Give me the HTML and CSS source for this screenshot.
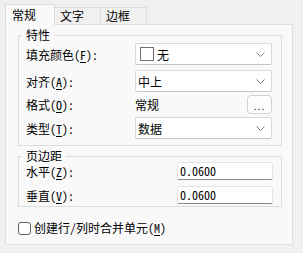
FILE: index.html
```html
<!DOCTYPE html>
<html lang="zh-CN">
<head>
    <meta charset="UTF-8">
    <title>单元格属性</title>
    <link rel="stylesheet" href="styles.css">
</head>
<body>
    <div class="tabs">
        <div class="tab active">常规</div>
        <div class="tab">文字</div>
        <div class="tab">边框</div>
    </div>
    <div class="panel">
        <fieldset class="group props">
            <legend>特性</legend>
            <div class="row r1">
                <span class="label">填充颜色(<u>F</u>):</span>
                <div class="select">
                    <span class="swatch"></span><span>无</span>
                    <svg class="chev" width="9" height="5" viewBox="0 0 9 5"><polyline points="0.5,0.5 4.5,4.5 8.5,0.5" fill="none" stroke="#808080" stroke-width="1"/></svg>
                </div>
            </div>
            <div class="row r2">
                <span class="label">对齐(<u>A</u>):</span>
                <div class="select">
                    <span>中上</span>
                    <svg class="chev" width="9" height="5" viewBox="0 0 9 5"><polyline points="0.5,0.5 4.5,4.5 8.5,0.5" fill="none" stroke="#808080" stroke-width="1"/></svg>
                </div>
            </div>
            <div class="row r3">
                <span class="label">格式(<u>O</u>):</span>
                <div class="format">
                    <span>常规</span>
                    <button class="dots">...</button>
                </div>
            </div>
            <div class="row r4">
                <span class="label">类型(<u>T</u>):</span>
                <div class="select">
                    <span>数据</span>
                    <svg class="chev" width="9" height="5" viewBox="0 0 9 5"><polyline points="0.5,0.5 4.5,4.5 8.5,0.5" fill="none" stroke="#808080" stroke-width="1"/></svg>
                </div>
            </div>
        </fieldset>

        <fieldset class="group margins">
            <legend>页边距</legend>
            <div class="row m1">
                <span class="label">水平(<u>Z</u>):</span>
                <div class="input">0.0600</div>
            </div>
            <div class="row m2">
                <span class="label">垂直(<u>V</u>):</span>
                <div class="input">0.0600</div>
            </div>
        </fieldset>

        <label class="check">
            <span class="box"></span>
            <span>创建行/列时合并单元(<u>M</u>)</span>
        </label>
    </div>
</body>
</html>
```

FILE: styles.css
```css
body {
    margin: 0;
    background-color: #f0f0f0;
    font-family: "Noto Sans Mono CJK SC", "Noto Sans CJK SC", sans-serif;
    font-size: 12px;
    color: #000;
    width: 303px;
    height: 253px;
    overflow: hidden;
}
u {
    text-decoration-thickness: 1px;
    text-underline-offset: 2px;
}
.tabs {
    display: flex;
    align-items: flex-end;
    padding: 4px 0 0 5px;
    height: 20px;
}
.tab {
    box-sizing: border-box;
    height: 17px;
    width: 46px;
    padding-left: 5px;
    line-height: 16px;
    border: 1px solid #dcdcdc;
    border-bottom: none;
    border-left: none;
    background-color: #f0f0f0;
}
.tab.active {
    width: 50px;
    height: 21px;
    margin-bottom: -1px;
    position: relative;
    border-left: 1px solid #dcdcdc;
    background-color: #f9f9f9;
    line-height: 19px;
    padding-left: 6px;
}
.panel {
    box-sizing: border-box;
    margin: 0 10px 0 5px;
    height: 221px;
    border: 1px solid #e0e0e0;
    background-color: #f9f9f9;
    padding: 3px 10px 0 12px;
}
.group {
    margin: 0;
    border: 1px solid #dcdcdc;
    padding: 0 8px 0 7px;
}
.group legend {
    margin-left: -4px;
    padding: 0 4px;
    line-height: 14px;
}
.props {
    height: 118px;
    box-sizing: border-box;
}
.margins {
    margin-top: 3px;
    height: 58px;
    box-sizing: border-box;
}
.row {
    display: flex;
    align-items: center;
}
.label {
    width: 109px;
    flex: none;
    line-height: 13px;
}
.r1 { height: 22px; margin-top: 1px; }
.r2 { height: 22px; margin-top: 5px; }
.r3 { height: 19px; margin-top: 3px; }
.r4 { height: 22px; margin-top: 3px; }
.select {
    box-sizing: border-box;
    flex: 1;
    height: 22px;
    display: flex;
    align-items: center;
    gap: 3px;
    padding: 0 6px 0 2px;
    background-color: #fff;
    border: 1px solid #d9d9d9;
    border-bottom-color: #c4c4c4;
    border-radius: 2px;
    margin-right: 1px;
}
.select .chev {
    margin-left: auto;
}
.swatch {
    width: 12px;
    height: 12px;
    border: 1px solid #707070;
    background-color: #fff;
    margin-left: 2px;
}
.format {
    flex: 1;
    display: flex;
    align-items: center;
    justify-content: space-between;
    height: 19px;
    margin-right: 1px;
}
.dots {
    box-sizing: border-box;
    width: 25px;
    height: 19px;
    padding: 4px 0 0;
    background-color: #fdfdfd;
    border: 1px solid #d0d0d0;
    border-radius: 4px;
    font-family: "Liberation Sans", sans-serif;
    font-size: 10px;
    letter-spacing: 1px;
    color: #000;
}
.m1 { height: 18px; margin-top: -1px; }
.m2 { height: 18px; margin-top: 6px; }
.m1 .label, .m2 .label {
    width: 151px;
}
.input {
    box-sizing: border-box;
    flex: 1;
    height: 18px;
    background-color: #fff;
    border: 1px solid #e3e3e3;
    border-bottom: 1px solid #8a8a8a;
    border-radius: 2px;
    padding-left: 2px;
    line-height: 16px;
}
.check {
    display: flex;
    align-items: center;
    gap: 3px;
    margin-top: 14px;
    line-height: 14px;
}
.check .box {
    box-sizing: border-box;
    width: 13px;
    height: 13px;
    border: 1px solid #5f5f5f;
    border-radius: 3px;
    background-color: #fff;
}
```
